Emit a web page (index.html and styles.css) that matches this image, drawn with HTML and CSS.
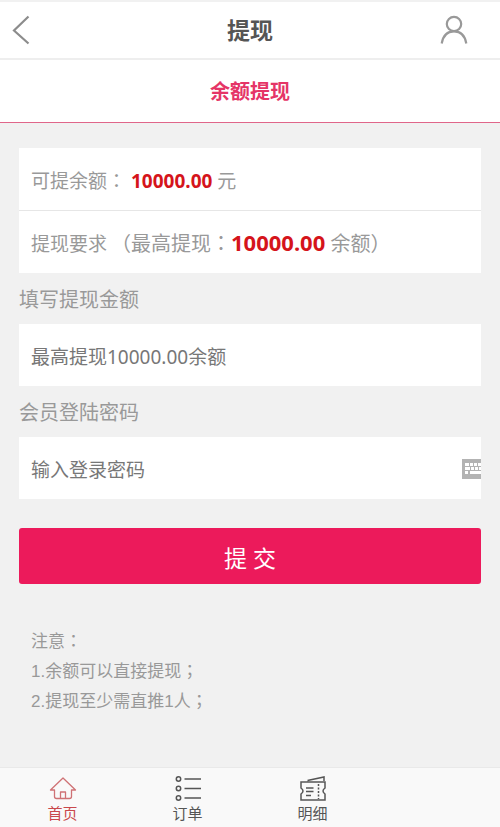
FILE: index.html
```html
<!DOCTYPE html>
<html lang="zh-CN">
<head>
<meta charset="utf-8">
<meta name="viewport" content="width=device-width, initial-scale=1">
<title>提现</title>
<link rel="stylesheet" href="styles.css">
</head>
<body>
<header class="topbar">
  <a class="topbar-link" href="#" aria-label="返回">
    <svg width="18" height="30" viewBox="0 0 18 30" fill="none" stroke="#8c8c8c" stroke-width="2.2"><path d="M16.500 1.500 2 15.500 16.500 28.500"/></svg>
  </a>
  <h1 class="title">提现</h1>
  <a class="topbar-link topbar-user" href="#" aria-label="会员中心">
    <svg width="28" height="30" viewBox="0 0 28 30" fill="none" stroke="#999" stroke-width="2.2"><circle cx="14" cy="9" r="7.200"/><path d="M1.700 28.500C3 21 7.500 16.400 14 16.400S25 21 26.300 28.500"/></svg>
  </a>
</header>
<h2 class="tab-title">余额提现</h2>

<main class="content">
  <form>
    <div class="card">
      <p class="row">可提余额<span class="punct" lang="zh-Hant">：</span> <strong>10000.00</strong> 元</p>
      <p class="row">提现要求<span class="rule">（最高提现<span class="punct" lang="zh-Hant">：</span><strong class="limit">10000.00</strong> 余额<span class="punct" lang="zh-Hant">）</span></span></p>
    </div>
    <label class="label" for="amount">填写提现金额</label>
    <div class="field"><input class="input" id="amount" type="text" placeholder="最高提现10000.00余额"></div>
    <label class="label" for="password">会员登陆密码</label>
    <div class="field">
      <input class="input" id="password" type="password" placeholder="输入登录密码">
      <svg class="keyboard" width="19" height="20" viewBox="0 0 19 20" aria-hidden="true"><path fill="#b3b3b3" d="M0 0h19v20H0z"/><path fill="#fff" d="M3 4h4v3H3zM8 4h3v3H8zM12 4h3v3h-3zM16 4h3v3h-3zM3 8h5v3H3zM9 8h3v3H9zM13 8h3v3h-3zM17 8h2v3h-2zM3 12h3v3H3zM8 12h11v3H8z"/></svg>
    </div>
    <button class="submit" type="submit">提 交</button>
  </form>
  <section class="notes">
    <p>注意<span class="punct" lang="zh-Hant">：</span></p>
    <p>1.余额可以直接提现<span class="punct" lang="zh-Hant">；</span></p>
    <p>2.提现至少需直推1人<span class="punct" lang="zh-Hant">；</span></p>
  </section>
</main>

<nav class="nav">
  <a class="nav-item active" href="#">
    <svg width="28" height="28" viewBox="0 0 28 28" fill="none" stroke="#cf7275" stroke-width="1.300" stroke-linejoin="round"><path d="M14 3 1.500 15h4v6.500q0 2 2 2h13q2 0 2-2V15h4zM11.500 23.500V17h5v6.500"/></svg>
    <span>首页</span>
  </a>
  <a class="nav-item" href="#">
    <svg width="28" height="28" viewBox="0 0 28 28" fill="none" stroke="#555" stroke-width="1.500"><circle cx="4.500" cy="4" r="2.200"/><circle cx="4.500" cy="13.500" r="2.200"/><circle cx="4.500" cy="23" r="2.200"/><path d="M10.500 4H27M10.500 13.500H27M10.500 23H27"/></svg>
    <span>订单</span>
  </a>
  <a class="nav-item" href="#">
    <svg width="28" height="28" viewBox="0 0 28 28" fill="none" stroke="#555" stroke-width="1.500"><path d="M2 7h24v6q-4 3 0 6v6H2v-6q4-3 0-6zM8.500 5.500 25 2v4M7 13h7.500M7 16.500h7.500M7 20.500h5"/><path stroke-dasharray="2 1.500" d="M19.500 9v15"/></svg>
    <span>明细</span>
  </a>
</nav>
</body>
</html>
```
FILE: styles.css
```css
* {
  box-sizing: border-box;
}

body {
  margin: 0;
  min-height: 100vh;
  display: flex;
  flex-direction: column;
  border-top: 2px solid #f1f1f1;
  background: #f1f1f1;
  color: #999;
  font: 400 19px/26px "Noto Sans", "Noto Sans CJK SC", sans-serif;
}

h1, h2, p {
  margin: 0;
}

a {
  color: inherit;
  text-decoration: none;
}

svg {
  display: block;
}

.topbar {
  display: flex;
  align-items: center;
  justify-content: space-between;
  height: 58px;
  padding: 0 12px;
  background: #fff;
  border-bottom: 2px solid #eee;
}

.topbar-link {
  display: flex;
  width: 48px;
}

.title {
  color: #555;
  font-size: 23px;
  font-weight: 700;
}

.tab-title {
  padding: 19px 0 17px;
  background: #fff;
  border-bottom: 1px solid #e0668a;
  color: #e53567;
  font-size: 20px;
  text-align: center;
}

.content {
  flex: 1;
  padding: 25px 19px;
}

.card {
  background: #fff;
}

.row {
  padding: 20px 12px 16px;
}

.row + .row {
  border-top: 1px solid #e6e6e6;
}

.rule {
  margin-left: 4px;
  font-size: 20px;
}

.rule,
.punct,
strong {
  line-height: 1;
}

.punct {
  font-family: "Noto Sans CJK TC", sans-serif;
}

strong {
  color: #d5141b;
  font-weight: 700;
}

.limit {
  font-size: 22px;
}

.label {
  display: block;
  padding: 14px 0 11px;
  font-size: 20px;
}

.field {
  display: flex;
  align-items: center;
  background: #fff;
}

.input {
  flex: 1;
  min-width: 0;
  height: 62px;
  padding: 4px 12px 0;
  border: 0;
  background: none;
  color: #666;
  font: inherit;
}

.input::placeholder {
  color: #777;
}

.keyboard {
  margin-top: 2px;
}

.submit {
  display: block;
  width: 100%;
  height: 56px;
  margin-top: 29px;
  padding: 4px 0 0;
  border: 0;
  border-radius: 3px;
  background: #ec1a5b;
  color: #fff;
  font: 400 23px/32px "Noto Sans", "Noto Sans CJK SC", sans-serif;
}

.notes {
  padding: 43px 12px 0;
  font-family: "Liberation Sans", "Noto Sans CJK SC", sans-serif;
  font-size: 17px;
  line-height: 30px;
}

.nav {
  display: grid;
  grid-template-columns: repeat(4, 1fr);
  height: 60px;
  border-top: 1px solid #e9e9e9;
  background: #f9f9f9;
  color: #555;
  font-size: 15px;
  line-height: 20px;
}

.nav-item {
  display: flex;
  flex-direction: column;
  align-items: center;
  padding-top: 7px;
}

.active {
  color: #c9484c;
}
```
